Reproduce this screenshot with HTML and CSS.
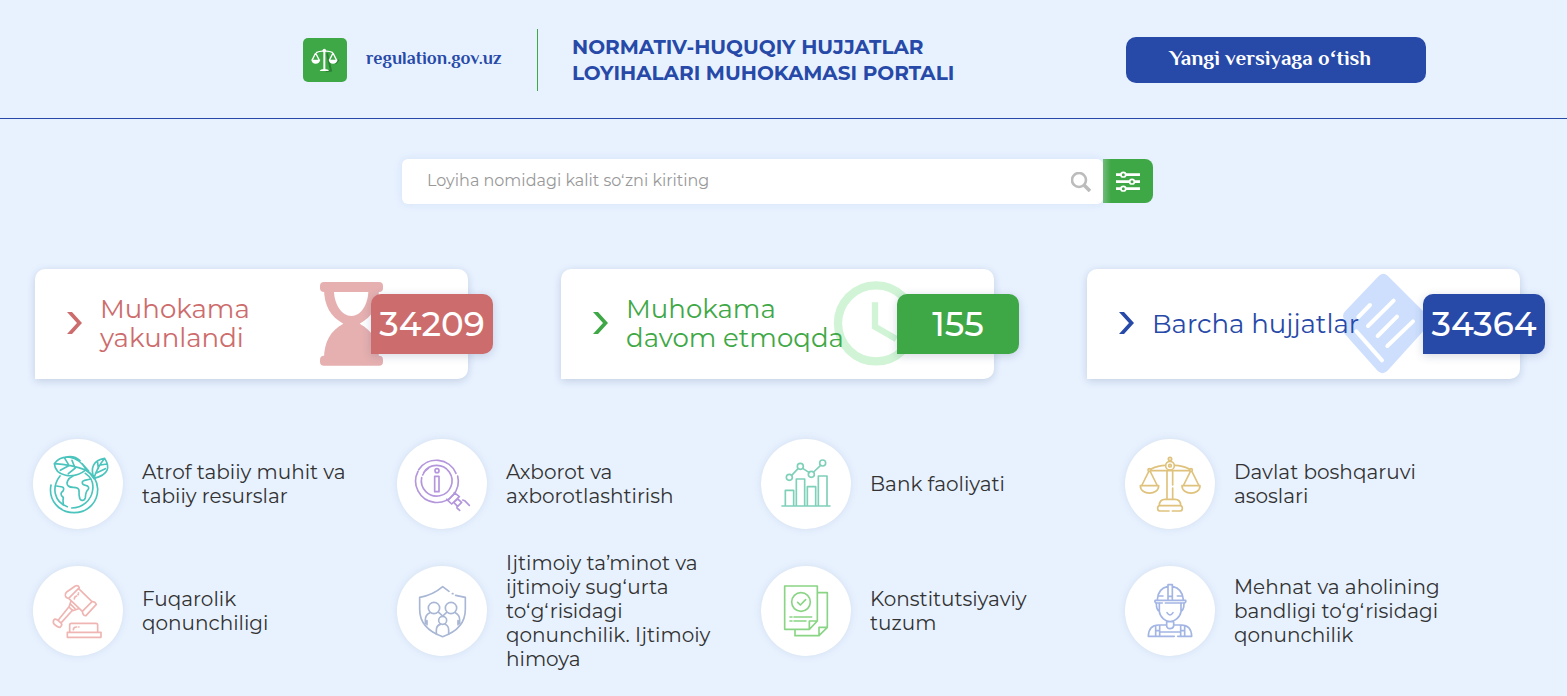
FILE: index.html
```html
<!DOCTYPE html>
<html lang="uz">

<head>
    <meta charset="UTF-8">
    <meta name="viewport" content="width=device-width, initial-scale=1">
    <title>regulation.gov.uz</title>
    <link rel="stylesheet" href="styles.css">
</head>

<body>
    <header class="header">
        <a href="#" class="logo">
            <svg class="logo-icon" viewBox="39 54 132 132" aria-hidden="true">
                <rect x="39" y="54" width="132" height="132" rx="15" fill="#3fa846" />
                <path d="M107 154l16-2-12-52M136 131l10-12" stroke="#2b8133" stroke-width="6" fill="none" />
                <g fill="none" stroke="#fff" stroke-width="4">
                    <path d="M78 98q14-6 25-4 12-2 26 4M77 99L66 121M77 99l11 22M129 99l-11 22M129 99l11 22" />
                    <path d="M103 94v56" stroke-width="6" />
                </g>
                <path d="M64 119h27q-3 12-14 12t-13-12zM116 119h27q-3 12-14 12t-13-12zM89 153q2-6 14-6t14 6z" fill="#fff" />
                <circle cx="103" cy="91" r="5" fill="#fff" />
            </svg>
            <span>regulation.gov.uz</span>
        </a>
        <h1 class="title">NORMATIV-HUQUQIY HUJJATLAR<br>LOYIHALARI MUHOKAMASI PORTALI</h1>
        <button type="button" class="version-button">Yangi versiyaga oʻtish</button>
    </header>

    <main>
        <form class="search">
            <div class="search-field">
                <input type="text" aria-label="Loyiha nomidagi kalit soʻzni kiriting" placeholder="Loyiha nomidagi kalit soʻzni kiriting">
                <button type="button" class="search-button" aria-label="Qidirish">
                    <svg viewBox="0 0 20 20" width="20" height="20" fill="none" stroke="#bcbcbc">
                        <circle cx="8" cy="8" r="7" stroke-width="2.6" />
                        <path d="M13 13l6 6" stroke-width="3.6" />
                    </svg>
                </button>
            </div>
            <button type="button" class="filter-button" aria-label="Filtr">
                <svg viewBox="168 436 72 63" width="24" height="21" fill="#3fa846" stroke="#fff" stroke-width="8">
                    <path d="M168 447h72M168 468h72M168 489h72" />
                    <g stroke-width="5">
                        <circle cx="190" cy="447" r="7" />
                        <circle cx="216" cy="468" r="7" />
                        <circle cx="190" cy="489" r="7" />
                    </g>
                </svg>
            </button>
        </form>

        <section class="cards">
            <a href="#" class="card card-red">
                <svg class="card-icon" viewBox="735 42 450 330" aria-hidden="true">
                    <g fill="#e6b0b0">
                        <rect x="900" y="81" width="189" height="30" rx="12" />
                        <rect x="900" y="302" width="189" height="30" rx="12" />
                        <path d="M912 100h165c0 52-20 86-58 106 38 20 58 54 58 106H912c0-52 20-86 58-106-38-20-58-54-58-106z" />
                    </g>
                    <path d="M942 111h103c-2 38-22 72-51 72s-50-34-52-72z" fill="#fff" />
                </svg>
                <svg class="arrow" viewBox="0 0 16 24" aria-hidden="true"><path d="M0 0h5l10 11L5 22H0l10-11z" /></svg>
                <span class="card-text">Muhokama<br>yakunlandi</span>
                <span class="count">34209</span>
            </a>
            <a href="#" class="card card-green">
                <svg class="card-icon" viewBox="723 42 450 330" fill="none" aria-hidden="true">
                    <circle cx="978" cy="205" r="114" stroke="#d0f4d5" stroke-width="25" />
                    <path d="M975 142v73l64 37" stroke="#d0f4d5" stroke-width="19" />
                </svg>
                <svg class="arrow" viewBox="0 0 16 24" aria-hidden="true"><path d="M0 0h5l10 11L5 22H0l10-11z" /></svg>
                <span class="card-text">Muhokama<br>davom etmoqda</span>
                <span class="count">155</span>
            </a>
            <a href="#" class="card card-blue">
                <svg class="card-icon" viewBox="720 42 450 330" aria-hidden="true">
                    <path d="M906 62q13-12 26 0l112 112q10 12 0 24L930 349q-14 11-27 0L803 236q-7-8-2-17l10-9-9-16q-8-12 1-24z" fill="#cddffd" />
                    <path d="M1036 180l12 12q10 14 0 26L930 349" fill="#cddffd" />
                    <path d="M844 186l35-36M873 213l77-76M902 243l58-58M931 273l77-74M838 229l77 87" fill="none" stroke="#fff" stroke-width="12" stroke-linecap="round" />
                </svg>
                <svg class="arrow" viewBox="0 0 16 24" aria-hidden="true"><path d="M0 0h5l10 11L5 22H0l10-11z" /></svg>
                <span class="card-text">Barcha hujjatlar</span>
                <span class="count">34364</span>
            </a>
        </section>

        <section class="categories">
            <a href="#" class="category">
                <svg class="category-icon" viewBox="39 27 270 270" stroke="#4bc4bd" aria-hidden="true">
                    <path d="M93 165C84 211 118 248 162 248c44 0 72-34 71-72-1-24-14-43-37-57M196 130c18 12 25 31 22 50-4 31-31 54-63 54M142 230C103 216 93 173 120 138" />
                    <path d="M103 101C124 72 171 73 199 119 158 151 106 138 103 101zM103 101q50 2 96 20 13 8 23 25M133 83l14 23M156 91l8 20M121 121l25-14M145 131l21-17M137 81q26-6 43 11M186 101l20 22" />
                    <path d="M222 145c-12-31-2-55 32-60 17 27 12 50-32 60zM222 145q8-30 32-60M235 116l-2-18M229 129l27-13M242 105l18-3" />
                    <path d="M158 139c-14 6-22 20-13 29 8 7 18 2 28 7 8 4 2 15 5 24 1 15 14 16 18 4 1-12 1-18 8-24 4-5 2-12-7-13-12-2-14-11-3-15l18-4M110 168l17 3q7 3 2 12-10 7-3 16 6 3 3 11l1 15" />
                </svg>
                <span>Atrof tabiiy muhit va<br>tabiiy resurslar</span>
            </a>
            <a href="#" class="category">
                <svg class="category-icon" viewBox="36 27 270 270" stroke="#b396dc" aria-hidden="true">
                    <path d="M101 119A64 64 0 0 1 213 130M218 138A64 64 0 1 1 99 124M110 143A46 46 0 1 0 116 128M113 135A46 46 0 0 1 131 114" />
                    <circle cx="156" cy="122" r="6" />
                    <path d="M149 139h13v46h-13zM208 188l15 12-23 22-15-14M211 188l-20 21M218 207l12 10-12 12-12-12zM233 210l6 2 14 14M216 229v5l8 7" />
                </svg>
                <span>Axborot va<br>axborotlashtirish</span>
            </a>
            <a href="#" class="category">
                <svg class="category-icon" viewBox="33 27 270 270" stroke="#7fd0b9" aria-hidden="true">
                    <path d="M96 228h144M106 227v-46h25v46M139 227v-80h25v80M172 227v-57h25v57M205 227v-89h26v89M125 136l19-20M158 115l20 13M191 126l20-19" />
                    <circle cx="118" cy="142" r="9" />
                    <circle cx="151" cy="109" r="9" />
                    <circle cx="184" cy="133" r="9" />
                    <circle cx="218" cy="99" r="9" />
                </svg>
                <span>Bank faoliyati</span>
            </a>
            <a href="#" class="category">
                <svg class="category-icon" viewBox="45 27 270 270" stroke="#dfc27c" aria-hidden="true">
                    <circle cx="180" cy="107" r="13" />
                    <circle cx="180" cy="107" r="4" />
                    <circle cx="180" cy="87" r="5" />
                    <circle cx="118" cy="120" r="4" />
                    <circle cx="243" cy="120" r="4" />
                    <path d="M123 117q22-11 43-11M238 117q-22-11-43-11M122 122h117M171 123v85M188 123v42M188 174v34M116 125l-20 40M121 125l20 40M241 125l-20 40M246 125l20 40" />
                    <path d="M91 167h55c0 30-55 30-55 0zM216 167h54c0 30-54 30-54 0zM148 227q0-19 17-19h30q17 0 17 19M177 243h-28q-6 0-6-8t6-8h62q6 0 6 8t-6 8h-24" />
                </svg>
                <span>Davlat boshqaruvi<br>asoslari</span>
            </a>
            <a href="#" class="category">
                <svg class="category-icon" viewBox="39 408 270 270" stroke="#efb5b3" aria-hidden="true">
                    <path d="M136 497q-1-7 4-11l26-18q8-3 12 5l-32 32q-8 0-10-8zM176 476l40 39M146 505l41 39M216 515q8-2 13 8l-31 34q-9 1-11-13zM153 513l-6 18 11 11 18-6M153 524l12 12M147 530l-32 40M158 540l-34 38M103 568q6-3 21 12 4 5-4 12-8 0-19-11-3-8 2-13zM163 507q0-7 7-9M175 489h1M174 493l1 1" />
                    <path d="M149 605v-20q0-5 5-5h74q5 0 5 5v20M142 607h101v15H142zM160 599q0-8 9-8h1M176 591h1" />
                </svg>
                <span>Fuqarolik<br>qonunchiligi</span>
            </a>
            <a href="#" class="category">
                <svg class="category-icon" viewBox="36 408 270 270" stroke="#a9b7d5" aria-hidden="true">
                    <path d="M192 484l-19-14q-30 26-69 32v36c0 42 28 68 69 82 41-14 68-40 68-82v-36l-29-6M202 491h2" />
                    <circle cx="147" cy="534" r="17" />
                    <circle cx="198" cy="534" r="17" />
                    <circle cx="173" cy="571" r="12" />
                    <path d="M121 581v-12q0-15 14-21M161 547l12 11 12-11M211 548q13 7 13 21v12M154 613v-12q0-15 12-18M180 583q11 4 11 18v12M126 572v12M219 572v12" />
                </svg>
                <span>Ijtimoiy taʼminot va<br>ijtimoiy sugʻurta<br>toʻgʻrisidagi<br>qonunchilik. Ijtimoiy<br>himoya</span>
            </a>
            <a href="#" class="category">
                <svg class="category-icon" viewBox="33 408 270 270" stroke="#8ad585" aria-hidden="true">
                    <path d="M104 468h98v105l-24 25h-74zM202 573h-24v25M202 488h30v104l-25 25h-72v-17M232 592h-25v25M143 517l8 8 16-16M120 561h6M132 561h53M120 573h6M132 573h36" />
                    <circle cx="153" cy="516" r="28" />
                </svg>
                <span>Konstitutsiyaviy<br>tuzum</span>
            </a>
            <a href="#" class="category">
                <svg class="category-icon" viewBox="45 408 270 270" stroke="#a3b5e4" aria-hidden="true">
                    <path d="M174 469q-31 7-32 40M187 469q31 7 33 40M174 508v-44h13v44M174 499h13M147 498h12M202 498h12M157 519h-19q-5-4-3-8h92q2 6-4 8h-57" />
                    <path d="M139 520q0 20 9 24M222 520q0 20-9 24M148 520v25c2 17 20 30 32 30s31-13 33-30v-25M171 548q9 14 18 0M170 575v13q1 8 10 8t11-8v-13M169 585h-23q-30 0-31 34h78M192 585h22q30 0 31 34h-42M137 587v31M149 587v31M149 606h63M212 587v31M224 587v31M137 602h12M212 602h12" />
                </svg>
                <span>Mehnat va aholining<br>bandligi toʻgʻrisidagi<br>qonunchilik</span>
            </a>
        </section>
    </main>
</body>

</html>
```
FILE: styles.css
```css
* {
    box-sizing: border-box;
}

body {
    margin: 0;
    background-color: #e8f2ff;
    font-family: Montserrat, Inter, sans-serif;
    color: #333;
}

a {
    text-decoration: none;
}

button {
    border: none;
    padding: 0;
    cursor: pointer;
}

.header {
    display: flex;
    align-items: center;
    min-height: 119px;
    padding: 2px 141px 0 303px;
    border-bottom: 1px solid #2749a8;
}

.logo {
    display: flex;
    align-items: center;
    gap: 19px;
    width: 235px;
    min-height: 62px;
    border-right: 1px solid #3fa846;
    color: #2749a8;
    font: bold 18px "El Messiri", "Liberation Serif", serif;
}

.logo-icon {
    width: 44px;
    height: 44px;
}

.title {
    margin: 0 0 0 34px;
    color: #2749a8;
    font-size: 20px;
    font-weight: 700;
    line-height: 26px;
}

.version-button {
    width: 300px;
    height: 46px;
    margin-left: auto;
    padding-right: 12px;
    border-radius: 10px;
    background-color: #2749a8;
    color: #fff;
    font: bold 21px "El Messiri", "Liberation Serif", serif;
}

.search {
    display: flex;
    max-width: 763px;
    margin: 40px auto 0;
    padding-right: 12px;
}

.search-field {
    position: relative;
    z-index: 1;
    display: flex;
    flex: 1;
    height: 45px;
    padding: 0 12px 0 25px;
    border-radius: 6px;
    background-color: #fff;
    box-shadow: 0 0 10px rgba(39, 73, 168, 0.1);
}

.search-field input {
    flex: 1;
    border: none;
    outline: none;
    background: none;
    padding: 0 0 2px;
    font-family: inherit;
    font-size: 16px;
    font-weight: 400;
}

.search-field input::placeholder {
    color: #999;
}

.search-button {
    display: flex;
    align-items: center;
    background: none;
}

.filter-button {
    display: flex;
    align-items: center;
    justify-content: center;
    width: 50px;
    height: 44px;
    border-radius: 0 8px 8px 0;
    background: linear-gradient(to right, #74c079, #3fa846 8px);
}

.cards {
    display: grid;
    grid-template-columns: repeat(3, 1fr);
    gap: 93px;
    padding: 65px 47px 0 35px;
}

.card {
    position: relative;
    display: flex;
    align-items: center;
    gap: 17px;
    min-height: 110px;
    padding-left: 32px;
    border-radius: 10px 10px 10px 0;
    background-color: #fff;
    box-shadow: 0 2px 8px rgba(39, 60, 110, 0.2);
}

.card-red {
    color: #cd6c6c;
}

.card-green {
    color: #3fa846;
}

.card-blue {
    color: #2749a8;
}

.card-icon {
    position: absolute;
    top: 0;
    right: 53px;
    width: 150px;
    height: 110px;
}

.arrow {
    width: 16px;
    height: 24px;
    fill: currentColor;
}

.card-text {
    position: relative;
    font-size: 26px;
    font-weight: 400;
    line-height: 29px;
}

.count {
    position: absolute;
    top: 25px;
    right: -25px;
    width: 122px;
    border-radius: 10px 10px 10px 0;
    background-color: currentColor;
    box-shadow: 0 2px 10px rgba(39, 60, 110, 0.2);
    font-size: 34px;
    font-weight: 500;
    line-height: 60px;
    text-align: center;
    -webkit-text-fill-color: #fff;
}

.categories {
    display: grid;
    grid-template-columns: repeat(4, 1fr);
    gap: 7px 0;
    padding: 45px 78px 24px 33px;
}

.category {
    display: flex;
    align-items: center;
    gap: 19px;
    min-height: 120px;
    color: #333;
    font-size: 20px;
    font-weight: 400;
    line-height: 24px;
}

.category-icon {
    flex-shrink: 0;
    width: 90px;
    height: 90px;
    border-radius: 50%;
    background-color: #fff;
    box-shadow: 0 0 8px rgba(39, 60, 110, 0.1);
    fill: none;
    stroke-width: 5;
    stroke-linecap: round;
    stroke-linejoin: round;
}
```
